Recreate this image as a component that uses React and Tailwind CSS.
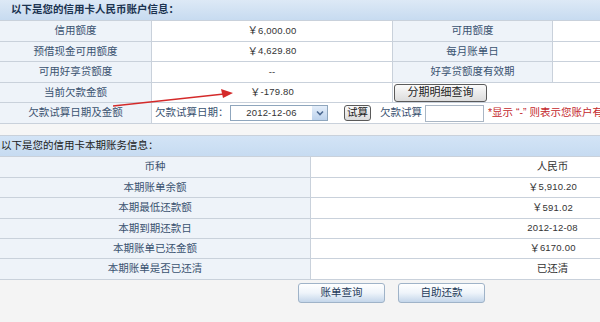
const font = { fontFamily: '"Liberation Sans", "Noto Sans CJK SC", sans-serif' };

function Num({ children }) {
  return <span className="text-[9.5px] tracking-[0.2px]">{children}</span>;
}

function Row({ h, children }) {
  return <div className={`flex border-b border-[#c9d1db] ${h}`}>{children}</div>;
}

function Label({ w, children }) {
  return (
    <div className={`${w} shrink-0 flex items-center justify-center border-r border-[#c9d1db] bg-[#eef3f9] text-[#3a5270]`}>
      {children}
    </div>
  );
}

function Value({ w, children }) {
  return (
    <div className={`${w} shrink-0 flex items-center justify-center border-r border-[#c9d1db] bg-white text-[#333]`}>
      {children}
    </div>
  );
}

function GrayButton({ children, className }) {
  return (
    <button className={`flex items-center justify-center rounded-[3px] border border-[#5a5a5a] bg-gradient-to-b from-[#fbfbfb] to-[#dcdcdc] text-[#222] ${className}`}>
      {children}
    </button>
  );
}

function BlueButton({ children }) {
  return (
    <button className="flex h-[20px] w-[87px] items-center justify-center rounded-[3px] border border-[#9fb3c8] bg-gradient-to-b from-white via-[#eef4fa] to-[#c4d6ea] text-[#1f3b5a]">
      {children}
    </button>
  );
}

export default function App() {
  return (
    <div className="relative h-[322px] w-[600px] overflow-hidden bg-[#f4f4f4] text-[10.5px]" style={font}>
      <div className="w-[795px]">
        {/* account info */}
        <div className="flex h-[21px] items-center border-b border-[#c9d1db] bg-gradient-to-b from-[#dde9f6] to-[#c7dbf0] pl-[11px] font-bold text-[#1b3350]">
          以下是您的信用卡人民币账户信息：
        </div>
        <Row h="h-[21px]">
          <Label w="w-[152px]">信用额度</Label>
          <Value w="w-[241px]"><span>￥</span><Num>6,000.00</Num></Value>
          <Label w="w-[160px]">可用额度</Label>
          <Value w="w-[242px]"><span></span></Value>
        </Row>
        <Row h="h-[20px]">
          <Label w="w-[152px]">预借现金可用额度</Label>
          <Value w="w-[241px]"><span>￥</span><Num>4,629.80</Num></Value>
          <Label w="w-[160px]">每月账单日</Label>
          <Value w="w-[242px]"><span></span></Value>
        </Row>
        <Row h="h-[21px]">
          <Label w="w-[152px]">可用好享贷额度</Label>
          <Value w="w-[241px]"><Num>--</Num></Value>
          <Label w="w-[160px]">好享贷额度有效期</Label>
          <Value w="w-[242px]"><span></span></Value>
        </Row>
        <Row h="h-[20px]">
          <Label w="w-[152px]">当前欠款金额</Label>
          <Value w="w-[241px]"><span>￥</span><Num>-179.80</Num></Value>
          <div className="flex flex-1 items-center bg-white pl-[1px]">
            <GrayButton className="h-[18px] w-[93px] text-[11px]">分期明细查询</GrayButton>
          </div>
        </Row>
        <Row h="h-[21px]">
          <Label w="w-[152px]">欠款试算日期及金额</Label>
          <div className="flex flex-1 items-center bg-white text-[#333]">
            <span className="ml-[3px] w-[75px] text-[#3a5270]">欠款试算日期：</span>
            <div className="flex h-[16px] w-[98px] items-center border border-[#8fa6bd] bg-white">
              <span className="flex-1 text-center"><Num>2012-12-06</Num></span>
              <span className="flex h-full w-[15px] items-center justify-center bg-gradient-to-b from-[#e4eefa] to-[#bcd2ec]">
                <svg width="8" height="6" viewBox="0 0 8 6"><path d="M1 1.5 L4 4.5 L7 1.5" fill="none" stroke="#4d6a92" strokeWidth="1.6" /></svg>
              </span>
            </div>
            <GrayButton className="ml-[16px] h-[16px] w-[27px] text-[10.5px]">试算</GrayButton>
            <span className="ml-[9px] text-[#3a5270]">欠款试算</span>
            <div className="ml-[3px] h-[17px] w-[59px] border border-[#a9b6c4] bg-white" />
            <span className="ml-[4px] whitespace-nowrap text-[#c3272b]">*显示 “-” 则表示您账户有溢缴款</span>
          </div>
        </Row>

        <div className="h-[11px] bg-[#f6f6f6]" />

        {/* bill info */}
        <div className="flex h-[22px] items-center border-y border-[#c9d1db] bg-gradient-to-b from-[#d3e4f6] to-[#c6dbf1] pl-[1px] text-[#222]">
          以下是您的信用卡本期账务信息：
        </div>
        {[
          ['币种', <span>人民币</span>, 'h-[21px]'],
          ['本期账单余额', <><span>￥</span><Num>5,910.20</Num></>, 'h-[20px]'],
          ['本期最低还款额', <><span>￥</span><Num>591.02</Num></>, 'h-[21px]'],
          ['本期到期还款日', <Num>2012-12-08</Num>, 'h-[20px]'],
          ['本期账单已还金额', <><span>￥</span><Num>6170.00</Num></>, 'h-[20px]'],
          ['本期账单是否已还清', <span>已还清</span>, 'h-[21px]'],
        ].map(([label, value, h]) => (
          <Row key={label} h={h}>
            <Label w="w-[311px]">{label}</Label>
            <Value w="w-[484px]">{value}</Value>
          </Row>
        ))}

        <div className="flex gap-[13px] pl-[298px] pt-[3px]">
          <BlueButton>账单查询</BlueButton>
          <BlueButton>自助还款</BlueButton>
        </div>
      </div>

      <svg className="pointer-events-none absolute left-0 top-0" width="600" height="322">
        <line x1="113" y1="106" x2="224" y2="94" stroke="#d42a2a" strokeWidth="1.3" />
        <polygon points="233,93 221,89 223,98" fill="#d42a2a" />
      </svg>
    </div>
  );
}
